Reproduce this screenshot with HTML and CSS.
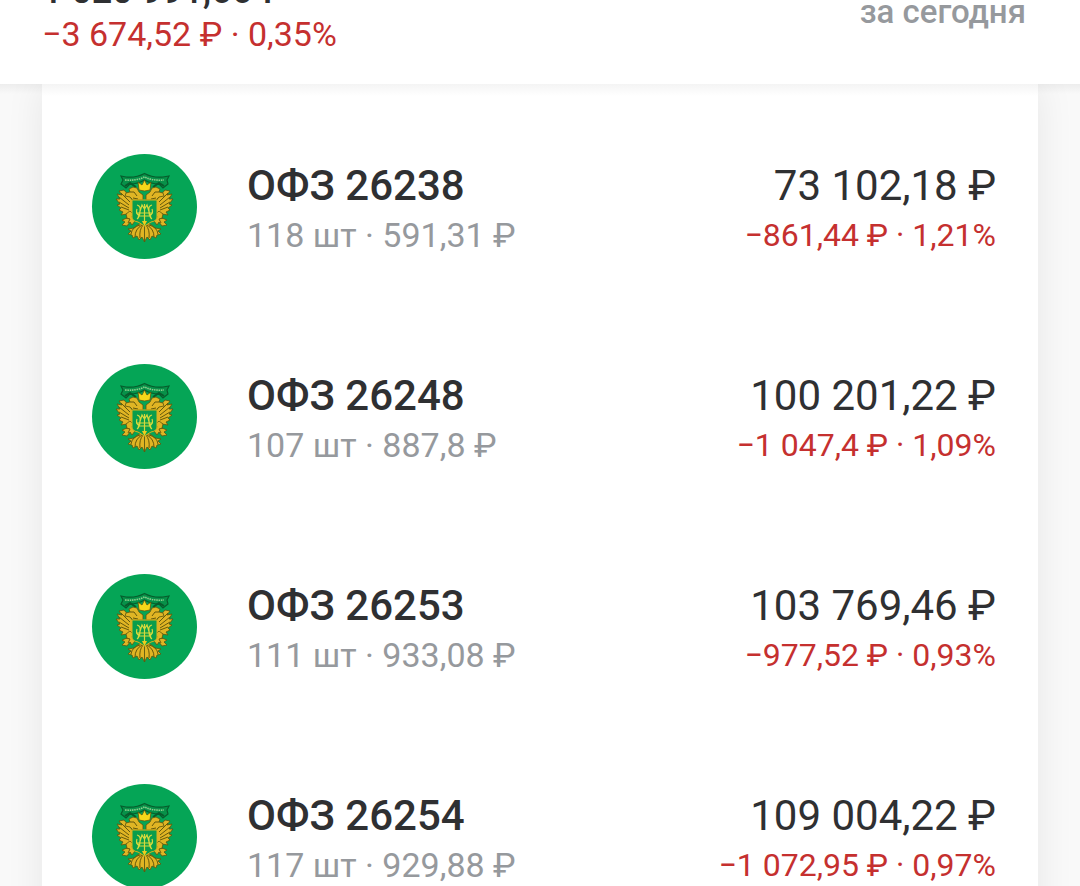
FILE: index.html
```html
<!DOCTYPE html>
<html lang="ru">
<head>
  <meta charset="UTF-8" />
  <meta name="viewport" content="width=device-width, initial-scale=1" />
  <title>Портфель</title>
  <link rel="stylesheet" href="styles.css">
</head>
<body>
<svg class="sprite" aria-hidden="true">
  <symbol id="emblem" viewBox="0 0 105 105">
    <!-- ribbon -->
    <path d="M29 22 L34 23 Q44 24 52.500 19.500 Q61 24 71 23 L77 22 L75 26 L76 30 L71 34 L67 30 Q59 30 52.500 26 Q46 30 38 30 L34 34 L29 30 L31 26 Z" fill="#079149" stroke="#075c2c" stroke-width="1.200"/>
    <path d="M33 26 Q44 27 52.500 23 Q61 27 72 26" fill="none" stroke="#8ccf8c" stroke-width="1.600" stroke-dasharray="1.500 .8"/>
    <path d="M33 32 L38 29 L44 33 M72 32 L67 29 L61 33" fill="none" stroke="#075c2c" stroke-width="2"/>
    <g stroke="#5a570f" stroke-width=".8" stroke-linejoin="round">
      <g id="half" fill="#e0b524">
        <!-- wing -->
        <path d="M42 48 L38 43 L32 36 L27 37 L30 41 L25 40 L28 45 L24 45 L28 50 L25 51 L29 54 L27 56 L31 58 L29 61 L35 60 L40 59 Z"/>
        <!-- head and neck -->
        <path d="M51 46 L41 46 L38 43 L33 42 L34 39 L38 38 L37 35 L41 33 L45 34 L47 38 L51 41 Z"/>
        <!-- leg and claw -->
        <path d="M38 57 L41 60 L40 63 L43 67 L40 71 L38 68 L35 72 L30 71 L33 68 L30 66 L35 64 L34 60 Z"/>
        <!-- tail -->
        <path d="M52.500 70 L47 70 L42 74 L36 75 L39 77 L36 80 L40 81 L41 84 L45 82 L47 86 L50 83 L52.500 88 Z"/>
      </g>
      <use href="#half" transform="matrix(-1 0 0 1 105 0)"/>
      <!-- crown -->
      <path d="M47 36 L46 28 L50 31 L52.500 26 L55 31 L59 28 L58 36 Q52.500 38 47 36 Z" fill="#f6d71a"/>
    </g>
    <!-- feathers -->
    <g id="feathers" fill="none" stroke="#66590c" stroke-width="1">
      <path d="M29 39 L38 48 M27 43 L37 51 M27 48 L37 54 M29 53 L37 56"/>
      <path d="M38 38 L42 38 L45 42 M41 44 L46 45 M34 64 L38 65 L36 69"/>
      <path d="M48 71 Q40 73 39 80 M50 71 Q43 75 43 83 M51 71 Q47 76 48 84"/>
    </g>
    <use href="#feathers" transform="matrix(-1 0 0 1 105 0)"/>
    <!-- shield -->
    <path d="M40 46 H65 V63 Q65 67 59 68 L52.500 72 L46 68 Q40 67 40 63 Z" fill="#0a9d4c" stroke="#d9b51d" stroke-width="1"/>
    <path d="M45 51 Q49 52 48 57 Q48 63 45 65 M60 51 Q56 52 57 57 Q57 63 60 65 M52.500 50 V68 M44 59 H61 M46 64 L50 51 L52.500 55 L55 51 L59 64 M45 55 Q43 60 48 62 H57 Q62 60 60 55" fill="none" stroke="#d6d93c" stroke-width="1.200"/>
    <path d="M50 67 L52.500 72 L55 67 Z" fill="#f0cb1c"/>
  </symbol>
</svg>

<header class="summary">
  <div class="summary-total">
    <span class="total">1 020 991,66 ₽</span>
    <span class="total-change">−3 674,52 ₽ · 0,35%</span>
  </div>
  <span class="period">за сегодня</span>
</header>

<main class="page">
  <ul class="assets">
    <li class="asset">
      <svg class="logo" aria-hidden="true"><use href="#emblem"/></svg>
      <div class="info">
        <h2>ОФЗ 26238</h2>
        <p>118 шт · 591,31 ₽</p>
      </div>
      <div class="value">
        <strong>73 102,18 ₽</strong>
        <p>−861,44 ₽ · 1,21%</p>
      </div>
    </li>
    <li class="asset">
      <svg class="logo" aria-hidden="true"><use href="#emblem"/></svg>
      <div class="info">
        <h2>ОФЗ 26248</h2>
        <p>107 шт · 887,8 ₽</p>
      </div>
      <div class="value">
        <strong>100 201,22 ₽</strong>
        <p>−1 047,4 ₽ · 1,09%</p>
      </div>
    </li>
    <li class="asset">
      <svg class="logo" aria-hidden="true"><use href="#emblem"/></svg>
      <div class="info">
        <h2>ОФЗ 26253</h2>
        <p>111 шт · 933,08 ₽</p>
      </div>
      <div class="value">
        <strong>103 769,46 ₽</strong>
        <p>−977,52 ₽ · 0,93%</p>
      </div>
    </li>
    <li class="asset">
      <svg class="logo" aria-hidden="true"><use href="#emblem"/></svg>
      <div class="info">
        <h2>ОФЗ 26254</h2>
        <p>117 шт · 929,88 ₽</p>
      </div>
      <div class="value">
        <strong>109 004,22 ₽</strong>
        <p>−1 072,95 ₽ · 0,97%</p>
      </div>
    </li>
  </ul>
</main>
</body>
</html>
```
FILE: styles.css
```css
* { box-sizing: border-box; }
body {
  margin: 0;
  height: 100vh;
  overflow: hidden;
  display: flex;
  flex-direction: column;
  font-family: Roboto, sans-serif;
  background: #f9f9f9;
  color: #2f3032;
}
h2, p, ul {
  margin: 0;
  padding: 0;
}
.sprite {
  display: none;
}
.summary {
  flex: none;
  height: 84px;
  padding: 0 54px 28px 42px;
  display: flex;
  justify-content: space-between;
  align-items: flex-end;
  overflow: hidden;
  background: #fff;
}
.summary-total {
  display: flex;
  flex-direction: column;
}
.total {
  font-size: 36px;
  font-weight: 500;
  line-height: 42px;
}
.total-change {
  font-size: 34px;
  line-height: 44px;
  color: #c5302f;
}
.period {
  margin-bottom: 24px;
  font-size: 33px;
  font-weight: 500;
  line-height: 40px;
  color: #96999d;
}
.page {
  flex: 1;
  min-height: 0;
  padding: 0 42px;
  overflow: hidden;
  background: linear-gradient(#ededed, #f9f9f9 10px);
}
.assets {
  list-style: none;
  padding: 17px 42px 0 50px;
  background: linear-gradient(#f4f4f4, #fff 12px);
  box-shadow: 0 0 36px rgba(0, 0, 0, 0.08);
}
.asset {
  height: 210px;
  display: flex;
  align-items: center;
}
.logo {
  flex: none;
  width: 105px;
  height: 105px;
  margin-right: 50px;
  border-radius: 50%;
  background: #05a556;
}
.info,
.value {
  padding-top: 6px;
}
.info {
  flex: 1;
}
.info h2 {
  font-size: 42px;
  font-weight: 500;
  line-height: 52px;
}
.info p {
  font-size: 34px;
  line-height: 46px;
  color: #96999d;
}
.value {
  text-align: right;
}
.value strong {
  display: block;
  font-size: 42px;
  font-weight: 400;
  line-height: 52px;
}
.value p {
  font-size: 32px;
  line-height: 46px;
  color: #c5302f;
}
```
